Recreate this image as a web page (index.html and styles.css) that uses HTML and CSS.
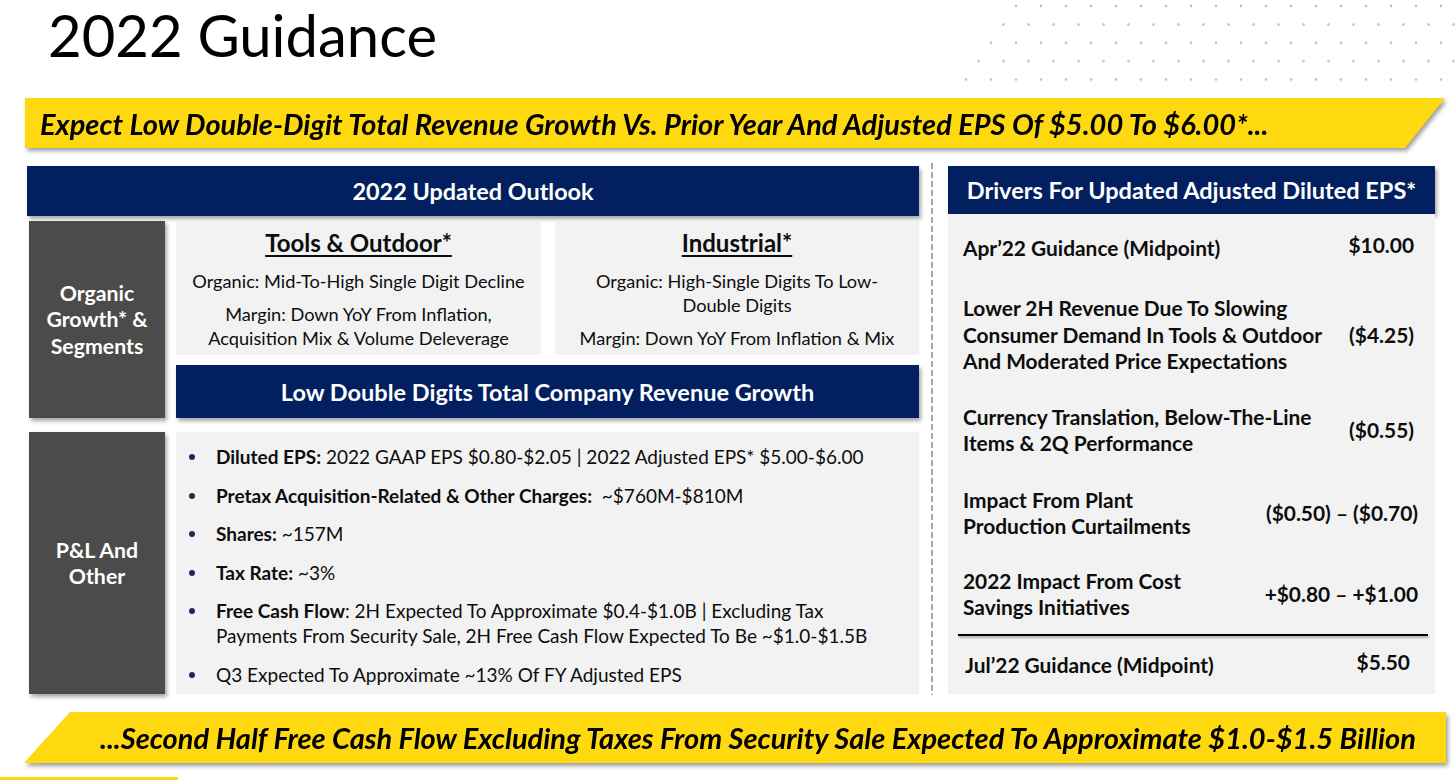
FILE: index.html
```html
<!DOCTYPE html>
<html lang="en">
<head>
<meta charset="utf-8">
<title>2022 Guidance</title>
<link rel="stylesheet" href="styles.css">
</head>
<body>
<div class="slide">
  <header class="header">
    <h1 class="title">2022 Guidance</h1>
    <svg class="dots" width="506" height="90" viewBox="0 0 506 90" aria-hidden="true">
      <defs>
        <pattern id="dotgrid" x="0" y="0" width="25" height="36.8" patternUnits="userSpaceOnUse">
          <circle cx="16" cy="6" r="1.3" fill="#bdbdbd"/>
          <circle cx="3.5" cy="24.4" r="1.3" fill="#bdbdbd"/>
        </pattern>
      </defs>
      <polygon points="62,0 506,0 506,88 7,88" fill="url(#dotgrid)"/>
    </svg>
  </header>

  <div class="banner-wrap banner-wrap--top">
    <div class="banner banner--top">Expect Low Double-Digit Total Revenue Growth Vs. Prior Year And Adjusted EPS Of $5.00 To $6.00*...</div>
  </div>

  <main class="main">
    <section class="outlook">
      <div class="navy-head">2022 Updated Outlook</div>

      <div class="group group--segments">
        <div class="side-label">Organic<br>Growth* &amp;<br>Segments</div>
        <div class="group-body">
          <div class="segments">
            <div class="seg-box">
              <div class="seg-title">Tools &amp; Outdoor*</div>
              <p class="seg-text">Organic: Mid-To-High Single Digit Decline</p>
              <p class="seg-text">Margin: Down YoY From Inflation,<br>Acquisition Mix &amp; Volume Deleverage</p>
            </div>
            <div class="seg-box">
              <div class="seg-title">Industrial*</div>
              <p class="seg-text">Organic: High-Single Digits To Low-<br>Double Digits</p>
              <p class="seg-text">Margin: Down YoY From Inflation &amp; Mix</p>
            </div>
          </div>
          <div class="navy-sub">Low Double Digits Total Company Revenue Growth</div>
        </div>
      </div>

      <div class="group group--pl">
        <div class="side-label">P&amp;L And<br>Other</div>
        <ul class="bullets">
          <li><b>Diluted EPS:</b> 2022 GAAP EPS $0.80-$2.05 | 2022 Adjusted EPS* $5.00-$6.00</li>
          <li><b>Pretax Acquisition-Related &amp; Other Charges:</b>&nbsp; ~$760M-$810M</li>
          <li><b>Shares:</b> ~157M</li>
          <li><b>Tax Rate:</b> ~3%</li>
          <li><b>Free Cash Flow</b>: 2H Expected To Approximate $0.4-$1.0B | Excluding Tax<br>Payments From Security Sale, 2H Free Cash Flow Expected To Be ~$1.0-$1.5B</li>
          <li>Q3 Expected To Approximate ~13% Of FY Adjusted EPS</li>
        </ul>
      </div>
    </section>

    <div class="divider"></div>

    <section class="drivers">
      <div class="drivers-head">Drivers For Updated Adjusted Diluted EPS*</div>
      <div class="drivers-body">
        <div class="drow"><span class="dlabel">Apr’22 Guidance (Midpoint)</span><span class="dval dval--up">$10.00</span></div>
        <div class="drow"><span class="dlabel">Lower 2H Revenue Due To Slowing<br>Consumer Demand In Tools &amp; Outdoor<br>And Moderated Price Expectations</span><span class="dval">($4.25)</span></div>
        <div class="drow"><span class="dlabel">Currency Translation, Below-The-Line<br>Items &amp; 2Q Performance</span><span class="dval">($0.55)</span></div>
        <div class="drow"><span class="dlabel">Impact From Plant<br>Production Curtailments</span><span class="dval dval--wide">($0.50) – ($0.70)</span></div>
        <div class="drow"><span class="dlabel">2022 Impact From Cost<br>Savings Initiatives</span><span class="dval dval--wide">+$0.80 – +$1.00</span></div>
        <div class="drule"></div>
        <div class="drow"><span class="dlabel dlabel--total">Jul’22 Guidance (Midpoint)</span><span class="dval dval--up dval--total">$5.50</span></div>
      </div>
    </section>
  </main>

  <div class="banner-wrap banner-wrap--bottom">
    <div class="banner banner--bottom">...Second Half Free Cash Flow Excluding Taxes From Security Sale Expected To Approximate $1.0-$1.5 Billion</div>
  </div>
  <div class="foot-strip"></div>
</div>
</body>
</html>
```

FILE: styles.css
```css
* { box-sizing: border-box; }

html, body {
  margin: 0;
  padding: 0;
  background: #ffffff;
}

body {
  font-family: Lato, "Open Sans", "Liberation Sans", sans-serif;
  color: #0d0d0d;
}

.slide {
  width: 1456px;
  height: 780px;
  overflow: hidden;
  position: relative;
}

/* ---------- header ---------- */
.header {
  height: 98px;
  position: relative;
}

.title {
  margin: 0;
  padding: 0 0 0 48px;
  font-size: 58px;
  font-weight: 400;
  line-height: 70px;
  color: #000;
}

.dots {
  position: absolute;
  top: 0;
  left: 950px;
}

/* ---------- yellow banners ---------- */
.banner-wrap {
  filter: drop-shadow(2px 3px 2px rgba(0, 0, 0, 0.38));
}

.banner-wrap--top {
  margin-left: 25px;
  width: 1420px;
}

.banner {
  background: #ffd90f;
  font-weight: 700;
  font-style: italic;
  color: #000;
  display: flex;
  align-items: center;
  white-space: nowrap;
}

.banner--top {
  height: 50px;
  padding-left: 15px;
  font-size: 29px;
  clip-path: polygon(0 0, 100% 0, calc(100% - 40px) 100%, 0 100%);
}

.banner-wrap--bottom {
  margin-top: 17px;
  margin-left: 24px;
  width: 1422px;
}

.banner--bottom {
  height: 51px;
  padding-left: 46px;
  justify-content: center;
  font-size: 29px;
  clip-path: polygon(46px 0, 100% 0, 100% 100%, 0 100%);
}

.foot-strip {
  margin-top: 14px;
  width: 178px;
  height: 3px;
  background: #ffd90f;
}

/* ---------- main ---------- */
.main {
  margin-top: 18px;
  height: 529px;
  display: flex;
  align-items: flex-start;
}

.outlook {
  margin-left: 27px;
  width: 892px;
}

.navy-head,
.navy-sub,
.drivers-head {
  background: #022060;
  color: #fff;
  font-weight: 700;
  display: flex;
  align-items: center;
  justify-content: center;
  box-shadow: 2px 3px 4px rgba(0, 0, 0, 0.35);
}

.navy-head {
  height: 50px;
  font-size: 23.4px;
}

.group {
  display: flex;
  gap: 11px;
  padding-left: 2px;
}

.group--segments {
  margin-top: 5px;
}

.group--pl {
  margin-top: 14px;
  height: 262px;
}

.side-label {
  width: 136px;
  flex: none;
  background: #4b4b4b;
  color: #fff;
  font-weight: 700;
  font-size: 21.3px;
  line-height: 26.5px;
  text-align: center;
  display: flex;
  align-items: center;
  justify-content: center;
  box-shadow: 2px 3px 4px rgba(0, 0, 0, 0.35);
}

.group-body {
  width: 743px;
}

.segments {
  display: flex;
  gap: 14px;
  height: 134px;
}

.seg-box {
  flex: 1;
  background: #f2f2f2;
  padding-top: 8px;
  text-align: center;
  display: flex;
  flex-direction: column;
  align-items: center;
  gap: 9px;
}

.seg-box:first-child {
  flex: 0 0 365px;
}

.seg-title {
  font-weight: 700;
  font-size: 24px;
  line-height: 28px;
  text-decoration: underline;
  text-decoration-thickness: 2px;
  text-underline-offset: 3px;
  margin-bottom: 3px;
}

.seg-text {
  margin: 0;
  font-size: 18.2px;
  line-height: 24px;
}

.navy-sub {
  margin-top: 10px;
  height: 53px;
  font-size: 23.5px;
}

.bullets {
  margin: 0;
  width: 743px;
  background: #f2f2f2;
  list-style: none;
  padding: 12px 0 0 0;
  display: flex;
  flex-direction: column;
  gap: 13.5px;
  font-size: 19px;
  line-height: 25px;
}

.bullets li {
  position: relative;
  padding-left: 40px;
}

.bullets li::before {
  content: "";
  position: absolute;
  left: 13px;
  top: 10px;
  width: 6px;
  height: 6px;
  border-radius: 50%;
  background: #1b2a5a;
}

.bullets b {
  font-weight: 700;
}

/* ---------- divider ---------- */
.divider {
  margin-left: 12px;
  margin-top: -3px;
  width: 2px;
  height: 532px;
  flex: none;
  background: repeating-linear-gradient(to bottom, #a9a9a9 0 6px, transparent 6px 9px);
}

/* ---------- drivers ---------- */
.drivers {
  margin-left: 15px;
  width: 487px;
}

.drivers-head {
  height: 48px;
  font-size: 23.5px;
}

.drivers-body {
  background: #f2f2f2;
  height: 480px;
  display: grid;
  grid-template-rows: 68px 106px 84px 82px 80px 2px 1fr;
  font-weight: 700;
  font-size: 20.9px;
  line-height: 26.5px;
}

.drow {
  display: flex;
  align-items: center;
  justify-content: space-between;
  padding: 0 21px 0 15px;
}

.dlabel {
  flex: 1;
}

.dlabel--total {
  padding-left: 2px;
}

.dval {
  white-space: nowrap;
}

.dval--up {
  padding-bottom: 6px;
}

.dval--wide {
  margin-right: -4px;
}

.dval--total {
  margin-right: 4px;
}

.drule {
  margin: 0 7px 0 10px;
  background: #000;
  box-shadow: 1px 2px 2px rgba(0, 0, 0, 0.3);
}
```
